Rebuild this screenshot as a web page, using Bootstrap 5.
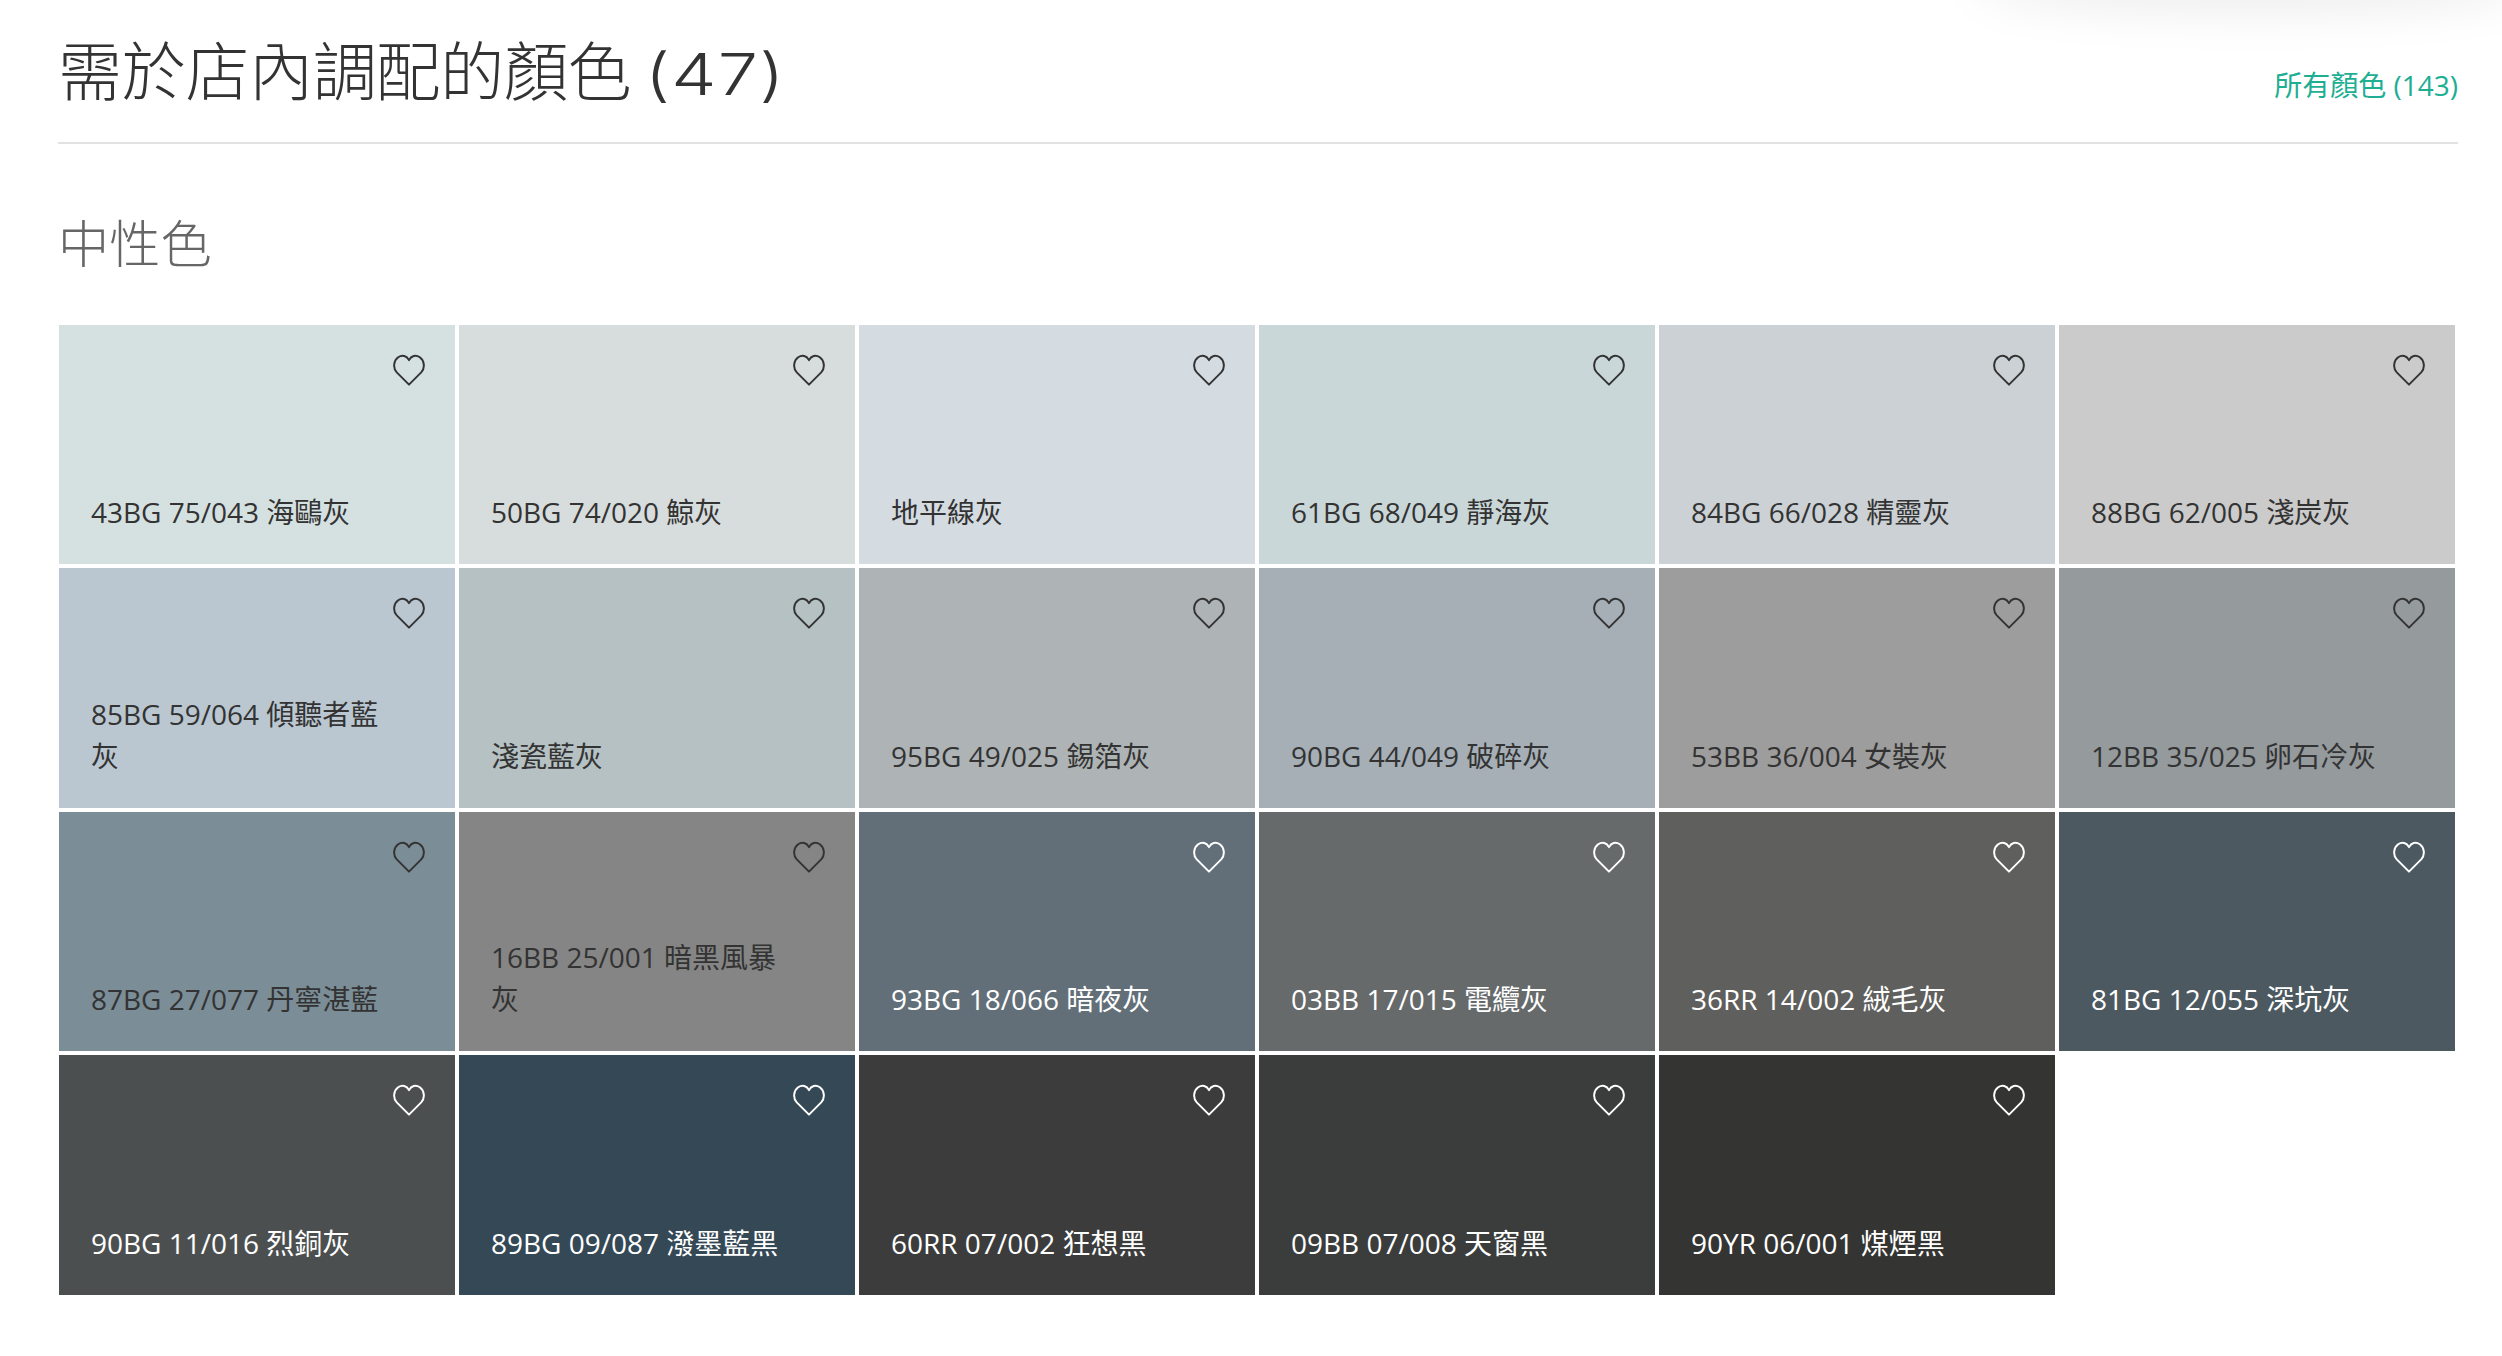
<!DOCTYPE html>
<html lang="zh-Hant">
<head>
<meta charset="utf-8">
<title>需於店內調配的顏色</title>
<link href="https://cdn.jsdelivr.net/npm/bootstrap@5.3.0/dist/css/bootstrap.min.css" rel="stylesheet">
<style>
html,body{background:#fff;}
body{font-family:"Open Sans","Noto Sans CJK TC",sans-serif;font-size:28px;line-height:1.5;color:#333;overflow:hidden;height:1356px;position:relative;}
.shell{padding:0 44px 0 58px;}
.top-shadow{position:absolute;top:-40px;right:-20px;width:540px;height:40px;box-shadow:0 0 50px 10px rgba(0,0,0,.08);border-radius:50%;}
.head-row{height:144px;border-bottom:2px solid #e2e2e2;}
.page-title{font-family:"Noto Sans CJK TC",sans-serif;font-weight:300;font-size:64px;letter-spacing:-.3px;line-height:72px;margin:31px 0 0;color:#333;}
.title-count{display:inline-block;font-family:"Inter",sans-serif;font-weight:300;font-size:58px;letter-spacing:1px;transform:scaleX(1.24);transform-origin:left center;}
.all-link{color:#1eae92;text-decoration:none;font-size:28px;line-height:42px;margin-top:64px;}
.sub-title{font-family:"Noto Sans CJK TC",sans-serif;font-weight:300;font-size:51.2px;line-height:60px;color:#666;margin:67px 0 0;}
.swatch-grid{display:grid;grid-template-columns:repeat(6,396px);column-gap:4px;row-gap:4px;margin:54px 0 0 1px;}
.swatch{height:239.4px;padding:0 32px 31px;display:flex;align-items:flex-end;position:relative;color:#333;}
.swatch.on-dark{color:#fff;}
.swatch-name{margin-bottom:0;max-width:300px;}
.heart{position:absolute;top:29px;right:30px;width:32px;height:32px;fill:none;stroke:currentColor;stroke-width:2.1;}
</style>
</head>
<body>
<div class="top-shadow"></div>
<div class="shell">
  <div class="head-row d-flex justify-content-between align-items-start">
    <h1 class="page-title">需於店內調配的顏色 <span class="title-count">(47)</span></h1>
    <a class="all-link" href="#">所有顏色 (143)</a>
  </div>
  <h2 class="sub-title">中性色</h2>
  <div class="swatch-grid" id="g"></div>
</div>
<script>
var d=[["43BG 75/043 海鷗灰","#d5e1e1",0],["50BG 74/020 鯨灰","#d7dcdc",0],["地平線灰","#d5dce1",0],["61BG 68/049 靜海灰","#cad7d9",0],["84BG 66/028 精靈灰","#cbd1d4",0],["88BG 62/005 淺炭灰","#cbcbcb",0],
["85BG 59/064 傾聽者藍灰","#bac7d0",0],["淺瓷藍灰","#b5c1c3",0],["95BG 49/025 錫箔灰","#aeb3b5",0],["90BG 44/049 破碎灰","#a6afb6",0],["53BB 36/004 女裝灰","#9d9d9d",0],["12BB 35/025 卵石冷灰","#959a9d",0],
["87BG 27/077 丹寧湛藍","#7b8d96",0],["16BB 25/001 暗黑風暴灰","#858585",0],["93BG 18/066 暗夜灰","#626f78",1],["03BB 17/015 電纜灰","#666a6b",1],["36RR 14/002 絨毛灰","#5f5f5d",1],["81BG 12/055 深坑灰","#4c5960",1],
["90BG 11/016 烈銅灰","#4c4f4f",1],["89BG 09/087 潑墨藍黑","#354856",1],["60RR 07/002 狂想黑","#3c3c3c",1],["09BB 07/008 天窗黑","#3b3d3c",1],["90YR 06/001 煤煙黑","#343432",1]];
document.getElementById('g').innerHTML=d.map(function(x){return '<div class="swatch'+(x[2]?' on-dark':'')+'" style="background:'+x[1]+'"><svg class="heart" viewBox="0 0 34 34"><path d="M17 32.5 4 19.5C-.5 14.5 .8 7 5.5 3.5 10 .5 14.500 2 17 6.500 19.500 2 24 .5 28.500 3.500 33.200 7 34.500 14.500 30 19.500Z" stroke-linejoin="round"/></svg><p class="swatch-name">'+x[0]+'</p></div>'}).join('');
</script>
</body>
</html>
